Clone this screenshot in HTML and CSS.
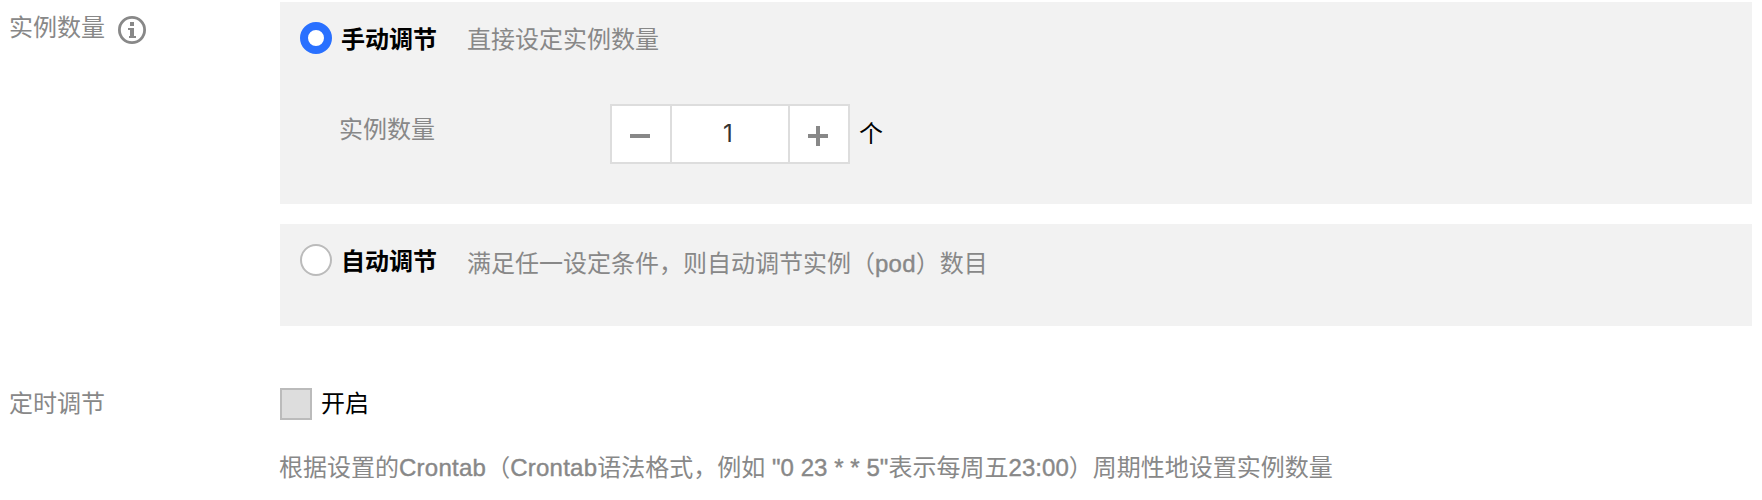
FILE: index.html
```html
<!DOCTYPE html>
<html lang="zh-CN">
<head>
<meta charset="utf-8">
<title>实例数量</title>
<link rel="stylesheet" href="styles.css">
</head>
<body>
<main class="form">
  <section class="row">
    <div class="label">
      <span>实例数量</span>
      <svg class="info" viewBox="0 0 28 28" width="28" height="28"><circle cx="14" cy="14" r="12.6" fill="none" stroke="#888" stroke-width="2.8"/><path d="M12 6h4v4h-4zM10 12h6v8h2v2h-7v-2h1v-6h-2z" fill="#888"/></svg>
    </div>
    <div class="panels">
      <div class="panel panel-manual">
        <div class="option">
          <span class="radio radio-on"></span>
          <span class="title">手动调节</span>
          <span class="hint">直接设定实例数量</span>
        </div>
        <div class="count">
          <span class="count-label">实例数量</span>
          <div class="stepper">
            <span class="step"><svg viewBox="0 0 20 20" width="20" height="20"><path d="M0 8h20v4H0z" fill="#888"/></svg></span>
            <span class="value">1</span>
            <span class="step"><svg viewBox="0 0 20 20" width="20" height="20"><path d="M0 8h8V0h4v8h8v4h-8v8H8v-8H0z" fill="#888"/></svg></span>
          </div>
          <span class="unit">个</span>
        </div>
      </div>
      <div class="panel panel-auto">
        <div class="option">
          <span class="radio"></span>
          <span class="title">自动调节</span>
          <span class="hint hint-auto">满足任一设定条件，则自动调节实例（<span class="latin">pod</span>）数目</span>
        </div>
      </div>
    </div>
  </section>
  <section class="row row-schedule">
    <div class="label label-schedule">定时调节</div>
    <div class="schedule">
      <div class="enable"><span class="checkbox"></span><span>开启</span></div>
      <p class="note">根据设置的<span class="latin">Crontab</span>（<span class="latin">Crontab</span>语法格式，例如 <span class="digits">"0 23 * * 5"</span>表示每周五<span class="digits">23:00</span>）周期性地设置实例数量</p>
    </div>
  </section>
</main>
</body>
</html>
```
FILE: styles.css
```css
* { box-sizing: border-box; }
body {
  margin: 0;
  background: #fff;
  color: #000;
  font: 24px/32px "Liberation Sans", "Noto Sans CJK SC", sans-serif;
  white-space: nowrap;
}
svg { display: block; }
.form { padding: 2px 10px 0 9px; }
.row { display: grid; grid-template-columns: 271px 1fr; }
.row-schedule { padding-top: 62px; }
.label { display: flex; align-items: flex-start; gap: 13px; padding-top: 10px; color: #888; }
.label-schedule { padding-top: 0; }
.info { margin-top: 4px; }
.panels { display: grid; gap: 20px; }
.panel { background: #f2f2f2; padding: 20px; }
.panel-manual { height: 202px; }
.panel-auto { height: 102px; }
.option { display: flex; align-items: flex-start; height: 32px; }
.radio {
  width: 32px;
  height: 32px;
  border: 2px solid #bbb;
  border-radius: 50%;
  background: #fff;
}
.radio-on { border: 8px solid #2970ff; }
.title { margin-left: 9px; padding-top: 2px; font-weight: 700; }
.hint { margin-left: 30px; padding-top: 2px; color: #888; }
.hint-auto { padding-top: 4px; }
.latin { letter-spacing: 0.25px; -webkit-text-stroke: 0.4px; }
.digits { letter-spacing: 0.06px; -webkit-text-stroke: 0.4px; }
.count { display: flex; align-items: flex-start; padding: 50px 0 0 39px; }
.count-label { width: 271px; padding-top: 10px; color: #888; }
.stepper {
  display: grid;
  grid-template-columns: 58px 120px 58px;
  width: 240px;
  height: 60px;
  border: 2px solid #ddd;
  background: #fff;
}
.step { display: flex; align-items: center; justify-content: center; padding: 4px 2px 0 0; }
.value {
  border: solid #ddd;
  border-width: 0 2px;
  padding: 12px 4px 0 0;
  color: #333;
  font-family: Inter, sans-serif;
  text-align: center;
}
.unit { margin-left: 9px; padding-top: 14px; }
.enable { display: flex; align-items: center; gap: 9px; }
.checkbox { width: 32px; height: 32px; border: 2px solid #bbb; background: #ddd; }
.note { margin: 32px 0 0 -1px; color: #888; }
```
